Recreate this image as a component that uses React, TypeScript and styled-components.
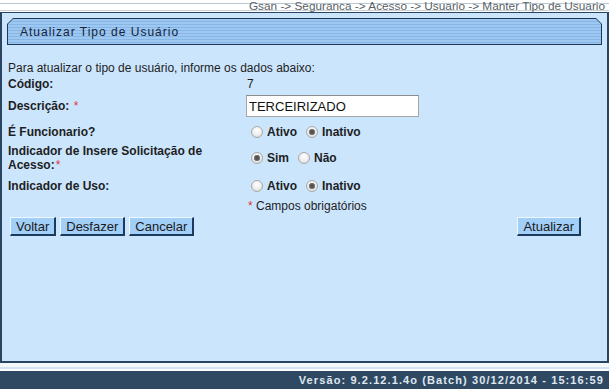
import styled, { createGlobalStyle } from 'styled-components';

const GlobalStyle = createGlobalStyle`
    html, body {
        margin: 0;
        padding: 0;
        background: #ffffff;
    }
    body {
        font-family: 'Liberation Sans', Arial, sans-serif;
        font-size: 12px;
        color: #1e1e1e;
    }
`;

const Page = styled.div`
    width: 609px;
    height: 389px;
    display: flex;
    flex-direction: column;
    overflow: hidden;
`;

const TopStrip = styled.div`
    height: 12px;
    display: flex;
    justify-content: flex-end;
    align-items: flex-end;
    padding-right: 4px;
    background:
        linear-gradient(to bottom, transparent 3px, #b9c6d3 3px, #b9c6d3 4px, transparent 4px),
        linear-gradient(to bottom, transparent 10px, #c9d2db 10px, #c9d2db 11px, transparent 11px),
        #ffffff;
`;

const Breadcrumb = styled.span`
    font-size: 11.8px;
    line-height: 11px;
    color: #5a5f66;
    white-space: nowrap;
`;

const Panel = styled.div`
    flex: 1;
    display: flex;
    flex-direction: column;
    background: #cbe5fd;
    border: 2px solid #2b4461;
    border-top-width: 1px;
    padding: 5px 5px 0 5px;
`;

const TitleFrame = styled.div`
    height: 25px;
    padding: 1px;
    background: #1f3654;
    clip-path: polygon(6px 0, calc(100% - 6px) 0, 100% 6px, 100% 100%, 0 100%, 0 6px);
`;

const TitleBar = styled.div`
    height: 100%;
    display: flex;
    align-items: center;
    padding-left: 12px;
    background: repeating-linear-gradient(to bottom, #9dc8f2 0, #9dc8f2 2px, #86b5e6 2px, #86b5e6 3px);
    clip-path: polygon(5px 0, calc(100% - 5px) 0, 100% 5px, 100% 100%, 0 100%, 0 5px);
`;

const TitleText = styled.span`
    font-size: 12px;
    letter-spacing: 1px;
    color: #16243a;
`;

const Intro = styled.div`
    margin-top: 16px;
    padding-left: 1px;
    line-height: 14px;
    color: #1e1e1e;
`;

const FormRow = styled.div<{ $h: number }>`
    display: grid;
    grid-template-columns: 238px 1fr;
    align-items: center;
    height: ${({ $h }) => $h}px;
    padding-left: 1px;
`;

const Label = styled.div`
    font-weight: bold;
    line-height: 14px;
    color: #1e1e1e;
`;

const Required = styled.span`
    color: #e03535;
    font-weight: normal;
    margin-left: 1px;
`;

const Value = styled.div`
    display: flex;
    align-items: center;
    padding-left: 1px;
`;

const TextInput = styled.input`
    box-sizing: border-box;
    width: 173px;
    height: 22px;
    margin-left: -1px;
    padding: 0 2px;
    border: 1px solid #a6a6a6;
    border-top-color: #8c8c8c;
    background: #ffffff;
    font-family: 'Liberation Sans', Arial, sans-serif;
    font-size: 13px;
    color: #111;
    outline: none;
`;

const RadioGroup = styled.div`
    display: flex;
    align-items: center;
    padding-left: 5px;
    gap: 9px;
`;

const Option = styled.label`
    display: inline-flex;
    align-items: center;
    gap: 4px;
    font-weight: bold;
    color: #1e1e1e;
`;

const Radio = styled.input.attrs({ type: 'radio' })`
    appearance: none;
    margin: 0;
    width: 12px;
    height: 12px;
    border-radius: 50%;
    border: 1px solid #a8a8a8;
    background: radial-gradient(circle at 50% 35%, #ffffff 0, #f1f1f1 45%, #d6d6d6 100%);

    &:checked {
        background:
            radial-gradient(circle, #4a4a4a 0, #5c5c5c 2px, #8a8a8a 3px, transparent 3.5px),
            radial-gradient(circle at 50% 35%, #ffffff 0, #f1f1f1 45%, #d6d6d6 100%);
    }
`;

const Note = styled.div`
    grid-column: 2;
    padding-left: 1px;
    font-size: 12px;
    color: #1e1e1e;
`;

const Actions = styled.div`
    display: flex;
    align-items: center;
    margin-top: 6px;
    padding: 0 21px 0 3px;
`;

const ButtonGroup = styled.div`
    display: flex;
    gap: 4px;
    flex: 1;
`;

const ActionButton = styled.button`
    height: 19px;
    padding: 0 5px;
    background: #a2cff8;
    border: 1px solid;
    border-color: #eef6ff #1c3a5e #1c3a5e #eef6ff;
    border-right-width: 2px;
    border-bottom-width: 2px;
    font-family: 'Liberation Sans', Arial, sans-serif;
    font-size: 13px;
    line-height: 15px;
    color: #1a1a1a;
    cursor: pointer;
`;

const Stripes = styled.div`
    height: 8px;
    background: linear-gradient(
        to bottom,
        #f4f8fb 0,
        #f4f8fb 4px,
        #d3e3ef 4px,
        #d3e3ef 6px,
        #ffffff 6px
    );
`;

const Footer = styled.div`
    height: 18px;
    display: flex;
    align-items: center;
    justify-content: flex-end;
    padding-right: 5px;
    background: #2f4963;
`;

const Version = styled.span`
    font-size: 11px;
    font-weight: bold;
    letter-spacing: 1.1px;
    color: #dfe7ef;
    white-space: nowrap;
`;

export default function App() {
    return (
        <>
            <GlobalStyle />
            <Page>
                <TopStrip>
                    <Breadcrumb>
                        Gsan -&gt; Seguranca -&gt; Acesso -&gt; Usuario -&gt; Manter Tipo de Usuario
                    </Breadcrumb>
                </TopStrip>

                <Panel>
                    <TitleFrame>
                        <TitleBar>
                            <TitleText>Atualizar Tipo de Usuário</TitleText>
                        </TitleBar>
                    </TitleFrame>

                    <Intro>Para atualizar o tipo de usuário, informe os dados abaixo:</Intro>

                    <FormRow $h={18}>
                        <Label>Código:</Label>
                        <Value>7</Value>
                    </FormRow>

                    <FormRow $h={26}>
                        <Label>
                            Descrição: <Required>*</Required>
                        </Label>
                        <Value>
                            <TextInput defaultValue="TERCEIRIZADO" />
                        </Value>
                    </FormRow>

                    <FormRow $h={25}>
                        <Label>É Funcionario?</Label>
                        <RadioGroup>
                            <Option>
                                <Radio name="funcionario" />
                                Ativo
                            </Option>
                            <Option>
                                <Radio name="funcionario" defaultChecked />
                                Inativo
                            </Option>
                        </RadioGroup>
                    </FormRow>

                    <FormRow $h={28}>
                        <Label>
                            Indicador de Insere Solicitação de
                            <br />
                            Acesso:<Required>*</Required>
                        </Label>
                        <RadioGroup>
                            <Option>
                                <Radio name="solicitacao" defaultChecked />
                                Sim
                            </Option>
                            <Option>
                                <Radio name="solicitacao" />
                                Não
                            </Option>
                        </RadioGroup>
                    </FormRow>

                    <FormRow $h={27}>
                        <Label>Indicador de Uso:</Label>
                        <RadioGroup>
                            <Option>
                                <Radio name="uso" />
                                Ativo
                            </Option>
                            <Option>
                                <Radio name="uso" defaultChecked />
                                Inativo
                            </Option>
                        </RadioGroup>
                    </FormRow>

                    <FormRow $h={12}>
                        <Note>
                            <Required>*</Required> Campos obrigatórios
                        </Note>
                    </FormRow>

                    <Actions>
                        <ButtonGroup>
                            <ActionButton>Voltar</ActionButton>
                            <ActionButton>Desfazer</ActionButton>
                            <ActionButton>Cancelar</ActionButton>
                        </ButtonGroup>
                        <ActionButton>Atualizar</ActionButton>
                    </Actions>
                </Panel>

                <Stripes />
                <Footer>
                    <Version>Versão: 9.2.12.1.4o (Batch) 30/12/2014 - 15:16:59</Version>
                </Footer>
            </Page>
        </>
    );
}
